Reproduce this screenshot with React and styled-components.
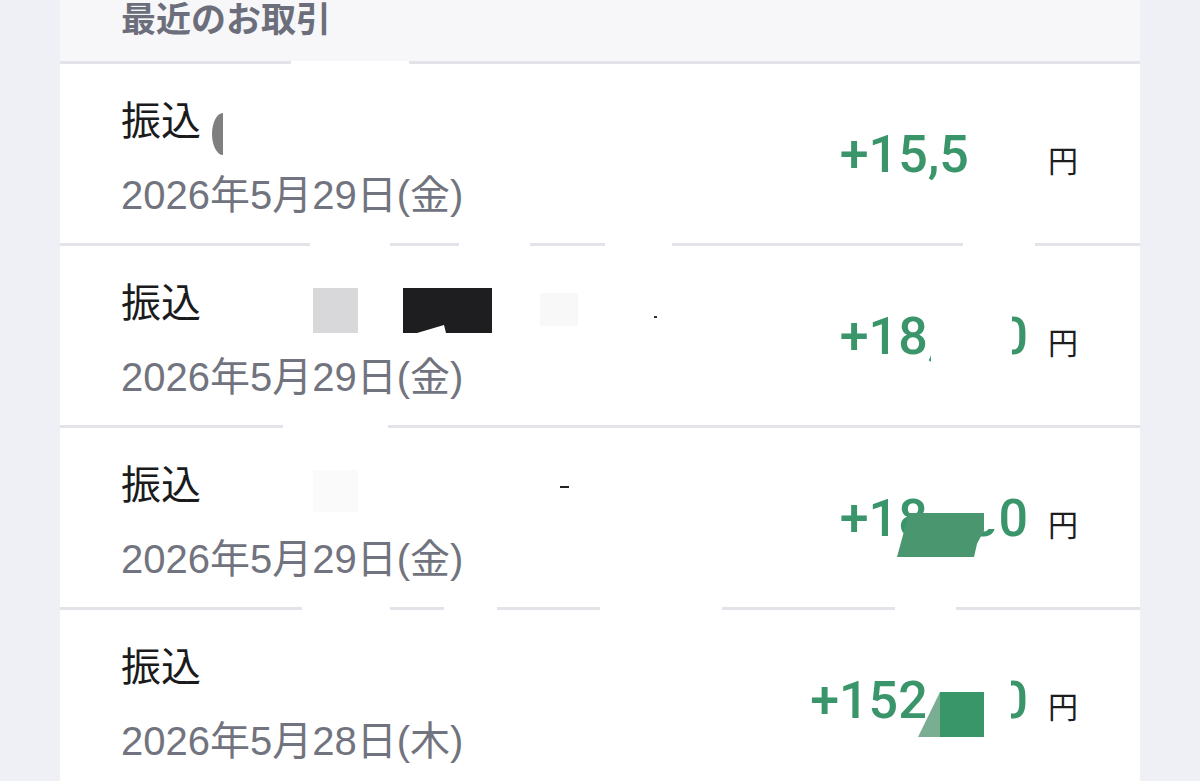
import React from 'react';
import styled, { createGlobalStyle } from 'styled-components';

const GlobalStyle = createGlobalStyle`
  html, body {
    margin: 0;
    padding: 0;
    background: #eff0f5;
  }
  body {
    font-family: "Noto Sans CJK JP", sans-serif;
  }
`;

const LINE = '#e3e4e9';
const GREEN = '#3a956a';

// builds a divider line with white holes (redacted spots in the screenshot)
const lineWithGaps = (gaps = []) => {
  if (!gaps.length) return LINE;
  const stops = [];
  let pos = 0;
  gaps.forEach(([a, b]) => {
    stops.push(`${LINE} ${pos}px ${a}px`, `#fff ${a}px ${b}px`);
    pos = b;
  });
  stops.push(`${LINE} ${pos}px 100%`);
  return `linear-gradient(to right, ${stops.join(', ')})`;
};

const Page = styled.div`
  height: 781px;
  padding: 0 60px;
  background: #eff0f5;
  overflow: hidden;
`;

const Card = styled.section`
  background: #fff;
  display: flex;
  flex-direction: column;
`;

const Header = styled.header`
  height: 61px;
  padding: 0 61px;
  background: #f7f7fa;
  font-size: 35px;
  font-weight: 700;
  line-height: 34px;
  color: #6c6f7b;
`;

const Divider = styled.div`
  height: 3px;
  flex-shrink: 0;
  background: ${({ $gaps }) => lineWithGaps($gaps)};
`;

const Row = styled.div`
  height: 179px;
  flex-shrink: 0;
  padding: 0 62px 0 61px;
  display: flex;
  justify-content: space-between;
`;

const Info = styled.div`
  display: flex;
  flex-direction: column;
  gap: 29px;
  padding-top: 30px;
`;

const Title = styled.div`
  position: relative;
  font-size: 40px;
  line-height: 48px;
  color: #1b1b1d;
`;

const DateText = styled.div`
  font-family: "Liberation Sans", "Noto Sans CJK JP", sans-serif;
  font-size: 40px;
  line-height: 48px;
  color: #71747e;
`;

const Amount = styled.div`
  align-self: center;
  margin-top: 3px;
  display: flex;
  align-items: baseline;
`;

const Value = styled.span`
  position: relative;
  font-family: Roboto, "Liberation Sans", sans-serif;
  font-weight: 500;
  font-size: 52px;
  line-height: 1;
  color: ${GREEN};
`;

const Yen = styled.span`
  margin-left: 20px;
  font-size: 30px;
  line-height: 1;
  color: #1d1d1f;
`;

// redaction marks lying over the names and amounts
const Mark = styled.span`
  position: absolute;
  left: ${({ $x }) => ($x === undefined ? 'auto' : `${$x}px`)};
  right: ${({ $r }) => ($r === undefined ? 'auto' : `${$r}px`)};
  top: ${({ $y }) => $y}px;
  width: ${({ $w }) => $w}px;
  height: ${({ $h }) => $h}px;
  background: ${({ $bg }) => $bg};
  border-radius: ${({ $round }) => $round || 0};
  clip-path: ${({ $clip }) => $clip || 'none'};
`;

const rows = [
  {
    date: '2026年5月29日(金)',
    amount: '+15,500',
    marks: [{ x: 91, y: 19, w: 11, h: 42, bg: '#7f7f80', round: '11px 0 0 11px / 21px 0 0 21px' }],
    covers: [{ r: -13, y: -4, w: 72, h: 62, bg: '#fff' }],
    gaps: [[250, 330], [399, 470], [545, 612], [903, 975]],
  },
  {
    date: '2026年5月29日(金)',
    amount: '+18,000',
    marks: [
      { x: 192, y: 12, w: 45, h: 45, bg: '#d8d8da' },
      {
        x: 282, y: 12, w: 89, h: 45, bg: '#1e1e20',
        clip: 'polygon(0 0, 100% 0, 100% 100%, 43px 100%, 41px 37px, 14px 100%, 0 100%)',
      },
      { x: 419, y: 17, w: 38, h: 33, bg: '#f8f8f8' },
      { x: 533, y: 40, w: 3, h: 2, bg: '#333' },
    ],
    covers: [{ r: 16, y: -6, w: 81, h: 74, bg: '#fff' }],
    gaps: [[223, 328]],
  },
  {
    date: '2026年5月29日(金)',
    amount: '+18,000',
    marks: [
      { x: 192, y: 12, w: 45, h: 42, bg: '#fafafa' },
      { x: 439, y: 28, w: 9, h: 2, bg: '#222' },
    ],
    covers: [
      { r: 29, y: -4, w: 72, h: 40, bg: '#fff' },
      {
        r: 44, y: 20, w: 87, h: 44, bg: '#4a976f',
        clip: 'polygon(12px 0, 100% 0, 100% 40%, 92% 70%, 77px 100%, 0 100%)',
      },
    ],
    gaps: [[242, 330], [384, 437], [540, 662], [835, 896]],
  },
  {
    date: '2026年5月28日(木)',
    amount: '+152,000',
    marks: [],
    covers: [
      { r: 17, y: -4, w: 86, h: 66, bg: '#fff' },
      {
        r: 44, y: 17, w: 66, h: 45,
        bg: 'linear-gradient(to right, #7aae92 0 22px, #389669 22px 100%)',
        clip: 'polygon(22px 0, 100% 0, 100% 100%, 0 100%)',
      },
    ],
    gaps: [],
  },
];

function App() {
  return (
    <Page>
      <GlobalStyle />
      <Card>
        <Header>最近のお取引</Header>
        <Divider $gaps={[[231, 349]]} />
        {rows.map((row, i) => (
          <React.Fragment key={i}>
            <Row>
              <Info>
                <Title>
                  振込
                  {row.marks.map((m, j) => (
                    <Mark key={j} $x={m.x} $y={m.y} $w={m.w} $h={m.h} $bg={m.bg} $round={m.round} $clip={m.clip} />
                  ))}
                </Title>
                <DateText>{row.date}</DateText>
              </Info>
              <Amount>
                <Value>
                  {row.amount}
                  {row.covers.map((c, j) => (
                    <Mark key={j} $r={c.r} $y={c.y} $w={c.w} $h={c.h} $bg={c.bg} $clip={c.clip} />
                  ))}
                </Value>
                <Yen>円</Yen>
              </Amount>
            </Row>
            {i < rows.length - 1 && <Divider $gaps={row.gaps} />}
          </React.Fragment>
        ))}
      </Card>
    </Page>
  );
}

export default App;
